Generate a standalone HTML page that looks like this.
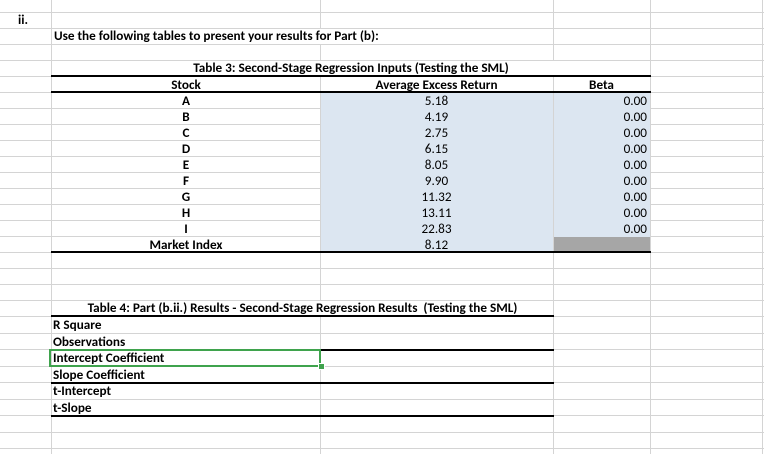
<!DOCTYPE html>
<html><head><meta charset="utf-8"><style>
body{margin:0;width:764px;height:454px;overflow:hidden;background:#fff;position:relative;font-family:Calibri,Carlito,"Liberation Sans",sans-serif;font-size:13.2px;color:#000}
.h{position:absolute;height:1px;background:#d4d4d4}
.v{position:absolute;width:1px;background:#d4d4d4}
.k{position:absolute;height:2px;background:#000}
.f{position:absolute}
.t{position:absolute;white-space:nowrap;line-height:16px}
.b{font-weight:bold}
</style></head><body>
<div class="f" style="left:321px;top:93px;width:232px;height:160px;background:#dce6f1"></div>
<div class="f" style="left:554px;top:93px;width:96px;height:144px;background:#dce6f1"></div>
<div class="f" style="left:554px;top:237px;width:96px;height:16px;background:#a6a6a6"></div>
<div class="h" style="left:0;top:12px;width:764px"></div>
<div class="h" style="left:0;top:28px;width:764px"></div>
<div class="h" style="left:0;top:44px;width:764px"></div>
<div class="h" style="left:0;top:60px;width:764px"></div>
<div class="h" style="left:0;top:76px;width:764px"></div>
<div class="h" style="left:0;top:92px;width:764px"></div>
<div class="h" style="left:0;top:108px;width:51px"></div><div class="h" style="left:650px;top:108px;width:114px"></div>
<div class="h" style="left:0;top:124px;width:51px"></div><div class="h" style="left:650px;top:124px;width:114px"></div>
<div class="h" style="left:0;top:140px;width:51px"></div><div class="h" style="left:650px;top:140px;width:114px"></div>
<div class="h" style="left:0;top:156px;width:51px"></div><div class="h" style="left:650px;top:156px;width:114px"></div>
<div class="h" style="left:0;top:172px;width:51px"></div><div class="h" style="left:650px;top:172px;width:114px"></div>
<div class="h" style="left:0;top:188px;width:51px"></div><div class="h" style="left:650px;top:188px;width:114px"></div>
<div class="h" style="left:0;top:204px;width:51px"></div><div class="h" style="left:650px;top:204px;width:114px"></div>
<div class="h" style="left:0;top:220px;width:51px"></div><div class="h" style="left:650px;top:220px;width:114px"></div>
<div class="h" style="left:0;top:236px;width:51px"></div><div class="h" style="left:650px;top:236px;width:114px"></div>
<div class="h" style="left:51px;top:108px;width:270px"></div>
<div class="h" style="left:51px;top:124px;width:270px"></div>
<div class="h" style="left:51px;top:140px;width:270px"></div>
<div class="h" style="left:51px;top:156px;width:270px"></div>
<div class="h" style="left:51px;top:172px;width:270px"></div>
<div class="h" style="left:51px;top:188px;width:270px"></div>
<div class="h" style="left:51px;top:204px;width:270px"></div>
<div class="h" style="left:51px;top:220px;width:270px"></div>
<div class="h" style="left:51px;top:236px;width:270px"></div>
<div class="h" style="left:0;top:252px;width:764px"></div>
<div class="h" style="left:0;top:268px;width:764px"></div>
<div class="h" style="left:0;top:284px;width:764px"></div>
<div class="h" style="left:0;top:300px;width:764px"></div>
<div class="h" style="left:0;top:316px;width:764px"></div>
<div class="h" style="left:0;top:333px;width:764px"></div>
<div class="h" style="left:0;top:349px;width:764px"></div>
<div class="h" style="left:0;top:366px;width:764px"></div>
<div class="h" style="left:0;top:382px;width:764px"></div>
<div class="h" style="left:0;top:399px;width:764px"></div>
<div class="h" style="left:0;top:415px;width:764px"></div>
<div class="h" style="left:0;top:432px;width:764px"></div>
<div class="h" style="left:0;top:448px;width:764px"></div>
<div class="v" style="left:51px;top:0;height:454px"></div>
<div class="v" style="left:320px;top:0;height:28px"></div>
<div class="v" style="left:320px;top:44px;height:16px"></div>
<div class="v" style="left:320px;top:76px;height:224px"></div>
<div class="v" style="left:320px;top:316px;height:138px"></div>
<div class="v" style="left:553px;top:0;height:60px"></div>
<div class="v" style="left:553px;top:76px;height:378px"></div>
<div class="v" style="left:650px;top:0;height:454px"></div>
<div class="v" style="left:762px;top:0;height:454px"></div>
<div class="k" style="left:51px;top:75px;width:600px"></div>
<div class="k" style="left:51px;top:91px;width:600px"></div>
<div class="k" style="left:51px;top:251px;width:600px"></div>
<div class="k" style="left:51px;top:315px;width:503px"></div>
<div class="k" style="left:51px;top:349px;width:503px"></div>
<div class="k" style="left:51px;top:382px;width:503px"></div>
<div class="k" style="left:51px;top:415px;width:503px"></div>
<div class="f" style="left:49px;top:349px;width:268px;height:14px;border:2px solid #3fa34d"></div>
<div class="f" style="left:318px;top:363px;width:5px;height:5px;background:#3fa34d;border:1px solid #fff"></div>
<div class="t b" style="left:18px;top:12px">ii.</div>
<div class="t b" style="left:54px;top:28px">Use the following tables to present your results for Part (b):</div>
<div class="t b" style="left:51px;top:60px;width:600px;text-align:center">Table 3: Second-Stage Regression Inputs (Testing the SML)</div>
<div class="t b" style="left:51px;top:77px;width:270px;text-align:center">Stock</div>
<div class="t b" style="left:320px;top:77px;width:233px;text-align:center">Average Excess Return</div>
<div class="t b" style="left:553px;top:77px;width:97px;text-align:center">Beta</div>
<div class="t b" style="left:51px;top:93px;width:270px;text-align:center">A<br>B<br>C<br>D<br>E<br>F<br>G<br>H<br>I<br>Market Index</div>
<div class="t" style="left:320px;top:93px;width:233px;text-align:center">5.18<br>4.19<br>2.75<br>6.15<br>8.05<br>9.90<br>11.32<br>13.11<br>22.83<br>8.12</div>
<div class="t" style="left:553px;top:93px;width:94px;text-align:right">0.00<br>0.00<br>0.00<br>0.00<br>0.00<br>0.00<br>0.00<br>0.00<br>0.00</div>
<div class="t b" style="left:51px;top:300px;width:503px;text-align:center">Table 4: Part (b.ii.) Results - Second-Stage Regression Results&nbsp; (Testing the SML)</div>
<div class="t b" style="left:53px;top:317px;line-height:16.5px">R Square<br>Observations<br>Intercept Coefficient<br>Slope Coefficient<br>t-Intercept<br>t-Slope</div>
</body></html>
